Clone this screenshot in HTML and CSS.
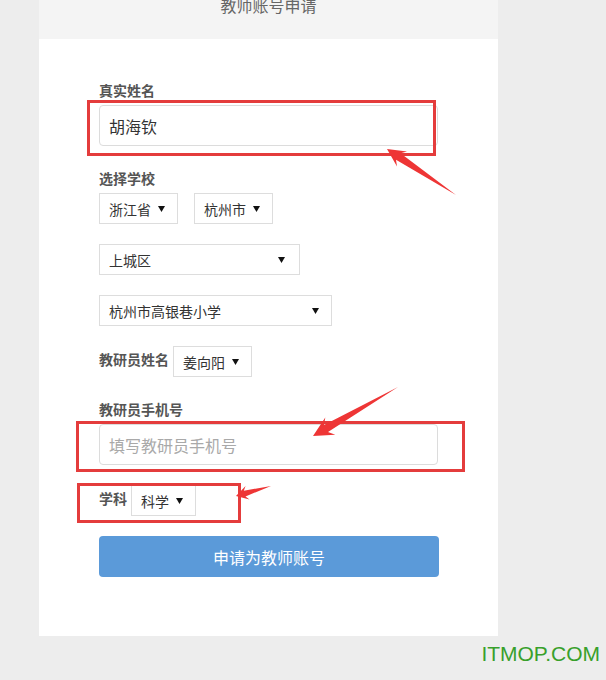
FILE: index.html
```html
<!DOCTYPE html>
<html lang="zh-CN">
<head>
<meta charset="utf-8">
<title>教师账号申请</title>
<link rel="stylesheet" href="styles.css">
</head>
<body>
<div class="page">
  <div class="card">
    <div class="card-head"><h1 class="title">教师账号申请</h1></div>
    <form class="form">
      <div class="label">真实姓名</div>
      <div class="input filled">胡海钦</div>

      <div class="label label-gap">选择学校</div>
      <div class="sel-row">
        <div class="select w-prov"><span>浙江省</span><svg class="caret" viewBox="0 0 7 6"><polygon points="0,0 7,0 3.5,6"/></svg></div>
        <div class="select w-city"><span>杭州市</span><svg class="caret" viewBox="0 0 7 6"><polygon points="0,0 7,0 3.5,6"/></svg></div>
      </div>
      <div class="sel-row row-gap">
        <div class="select w-dist"><span>上城区</span><svg class="caret" viewBox="0 0 7 6"><polygon points="0,0 7,0 3.5,6"/></svg></div>
      </div>
      <div class="sel-row row-gap">
        <div class="select w-school"><span>杭州市高银巷小学</span><svg class="caret" viewBox="0 0 7 6"><polygon points="0,0 7,0 3.5,6"/></svg></div>
      </div>
      <div class="sel-row inline-row row-gap">
        <div class="label inline-label">教研员姓名</div>
        <div class="select w-staff"><span>姜向阳</span><svg class="caret" viewBox="0 0 7 6"><polygon points="0,0 7,0 3.5,6"/></svg></div>
      </div>

      <div class="label label-gap">教研员手机号</div>
      <div class="input placeholder">填写教研员手机号</div>

      <div class="sel-row inline-row row-gap">
        <div class="label inline-label">学科</div>
        <div class="select w-subj"><span>科学</span><svg class="caret" viewBox="0 0 7 6"><polygon points="0,0 7,0 3.5,6"/></svg></div>
      </div>

      <div class="button row-gap">申请为教师账号</div>
    </form>
  </div>
  <div class="watermark">ITMOP.COM</div>

  <svg class="marks" width="606" height="680" viewBox="0 0 606 680">
    <rect x="88.5" y="101.5" width="346" height="53"/>
    <rect x="77.5" y="422.5" width="386" height="48"/>
    <rect x="78.5" y="484.5" width="161" height="37"/>
    <polygon class="arrow" points="387,149 407,151.5 400.5,153.2 456,195 396,159.8 397,166.5"/>
    <polygon class="arrow" points="313,436 325.3,417.4 324,425 398,387 328,432 335.3,434.7"/>
    <polygon class="arrow" points="236,496 245.6,486 243.8,490.7 271,486 245.5,496.4 249.5,499.4"/>
  </svg>
</div>
</body>
</html>
```

FILE: styles.css
```css
html, body {
  margin: 0;
  padding: 0;
  background: #ededed;
}

body {
  font-family: "Noto Sans CJK SC", "Noto Sans", sans-serif;
  color: #333;
}

.page {
  position: relative;
  width: 606px;
  height: 680px;
  overflow: hidden;
}

.card {
  margin-left: 39px;
  width: 459px;
  background: #fff;
}

.card-head {
  height: 39px;
  background: #f4f4f4;
  overflow: hidden;
}

.title {
  margin: -3px 0 0;
  font-size: 16px;
  line-height: 16px;
  font-weight: normal;
  color: #666;
  text-align: center;
}

.form {
  display: flex;
  flex-direction: column;
  align-items: flex-start;
  padding: 41px 60px 59px;
}

.label {
  font-size: 14px;
  line-height: 20px;
  font-weight: bold;
  color: #555;
  margin-bottom: 5px;
}

.label-gap {
  margin-top: 22px;
  margin-bottom: 5px;
}

.input {
  box-sizing: border-box;
  width: 339px;
  height: 41px;
  border: 1px solid #dcdcdc;
  border-radius: 4px;
  padding: 0 9px;
  display: flex;
  align-items: center;
  font-size: 16px;
}

.input.filled {
  color: #333;
}

.input.placeholder {
  color: #a9a9a9;
}

.sel-row {
  display: flex;
  gap: 16px;
}

.row-gap {
  margin-top: 20px;
}

.inline-row {
  gap: 4px;
  align-items: flex-start;
}

.inline-label {
  margin: 3px 0 0;
}

.select {
  box-sizing: border-box;
  height: 31px;
  border: 1px solid #dddddd;
  background: #fff;
  display: flex;
  align-items: center;
  justify-content: space-between;
  padding: 1px 12px 0 9px;
  font-size: 14px;
  color: #333;
}

.caret {
  width: 7px;
  height: 6px;
  fill: #111;
}

.w-prov { width: 79px; }
.w-city { width: 79px; }
.w-dist { width: 201px; padding-right: 14px; }
.w-school { width: 233px; padding-right: 12px; }
.w-staff { width: 79px; }
.w-subj { width: 65px; }

.button {
  box-sizing: border-box;
  width: 340px;
  height: 41px;
  border-radius: 4px;
  background: #5b9ad9;
  color: #fff;
  font-size: 16px;
  display: flex;
  align-items: center;
  justify-content: center;
}

.watermark {
  margin-top: 6px;
  padding-right: 6px;
  text-align: right;
  font-family: "Liberation Sans", Arial, sans-serif;
  font-size: 21px;
  line-height: 24px;
  color: #38a02b;
}

.marks {
  position: absolute;
  left: 0;
  top: 0;
  pointer-events: none;
}

.marks rect {
  fill: none;
  stroke: #e43c3c;
  stroke-width: 3;
}

.marks .arrow {
  fill: #ee3535;
}
```
